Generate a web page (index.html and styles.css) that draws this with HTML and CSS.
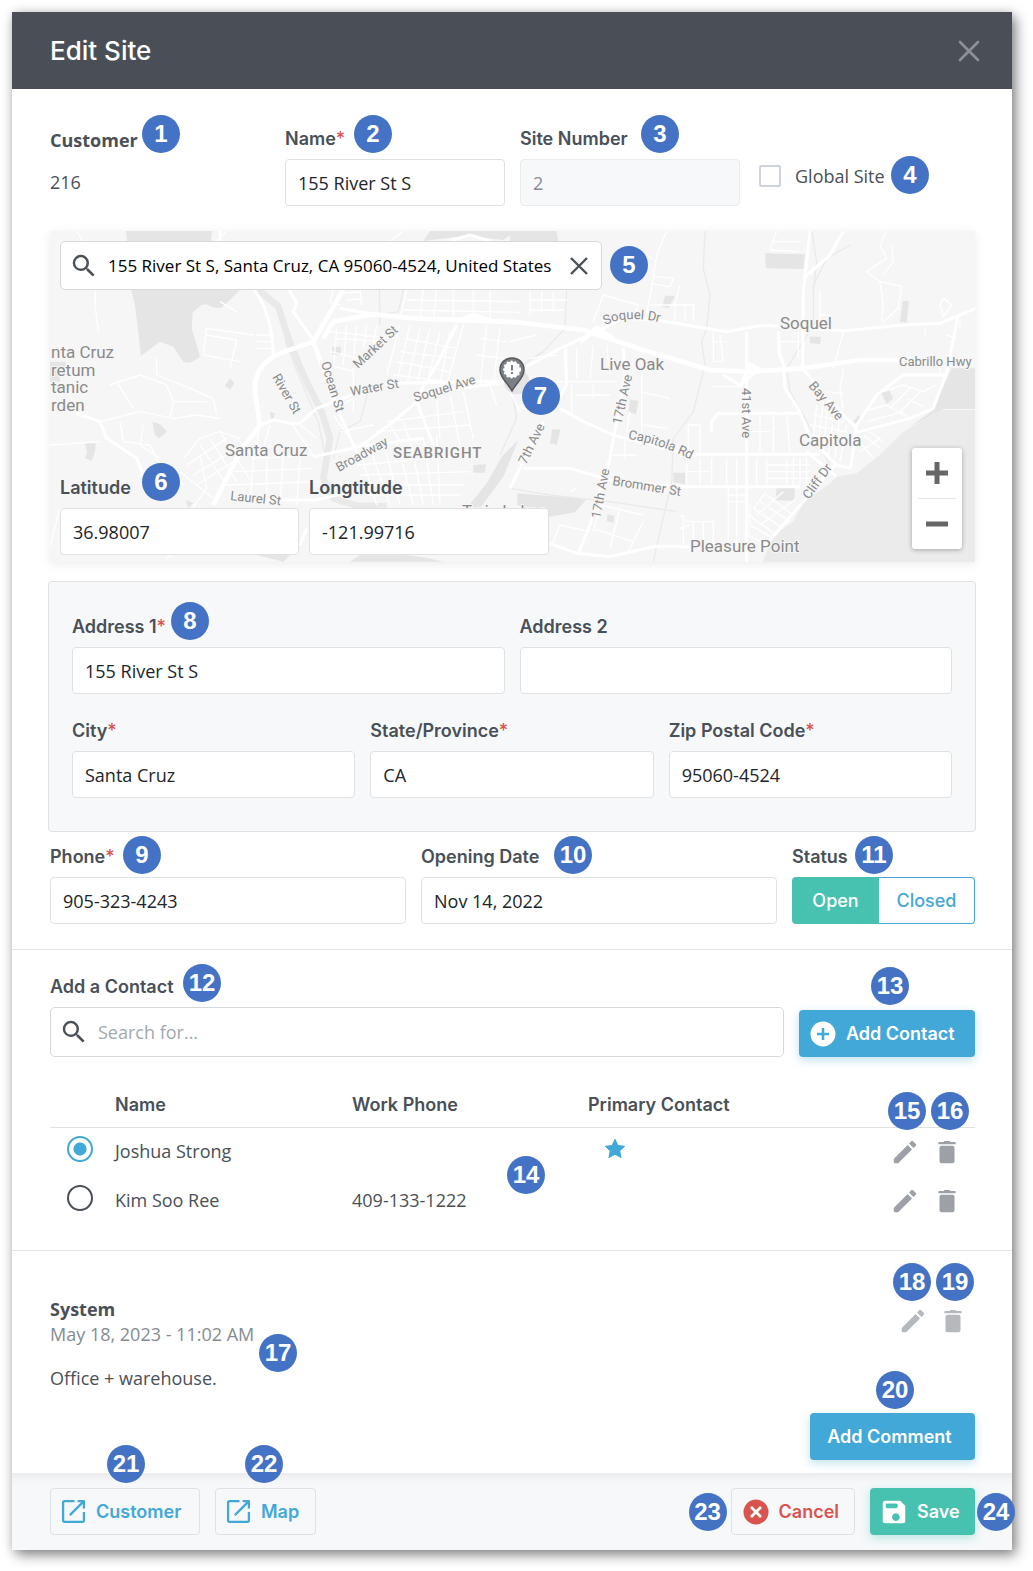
FILE: index.html
```html
<!DOCTYPE html>
<html lang="en">
<head>
<meta charset="utf-8">
<meta name="viewport" content="width=device-width, initial-scale=1">
<title>Edit Site</title>
<link rel="stylesheet" href="styles.css">
</head>
<body>
<svg class="sprite" aria-hidden="true">
  <symbol id="i-search" viewBox="0 0 24 24"><path fill="currentColor" d="M15.5 14h-.79l-.28-.27A6.47 6.47 0 0 0 16 9.500 6.500 6.500 0 1 0 9.500 16c1.610 0 3.090-.59 4.230-1.570l.27.28v.79l5 4.990L20.490 19l-4.990-5zm-6 0C7.010 14 5 11.990 5 9.500S7.010 5 9.500 5 14 7.010 14 9.500 11.990 14 9.500 14z"/></symbol>
  <symbol id="i-edit" viewBox="0 0 24 24"><path fill="currentColor" d="M3 17.500V20q0 1 1 1h2.500L17.600 9.900l-3.500-3.500zM20.700 7q.6-.7 0-1.400l-2.300-2.300q-.7-.6-1.400 0L15.200 5.200l3.600 3.600z"/></symbol>
  <symbol id="i-trash" viewBox="0 0 24 24"><path fill="currentColor" d="M5.700 4h3.600l.6-.8h4.200l.6.8h3.600q.7 0 .7.900t-.7.900H5.700q-.7 0-.7-.9t.7-.9zM6 8.600Q6 7 7.600 7h8.800Q18 7 18 8.600v10.800q0 1.600-1.600 1.600H7.600Q6 21 6 19.400z"/></symbol>
  <symbol id="i-open" viewBox="0 0 24 24"><path fill="none" stroke="currentColor" stroke-width="2.200" stroke-linejoin="round" d="M13 2H3.500Q2 2 2 3.500v17Q2 22 3.500 22h17q1.500 0 1.500-1.500V12.500M16 2h6v7M21.500 2.500 8.500 15.500"/></symbol>
</svg>

<main class="modal">
  <header class="modal-head">
    <h1>Edit Site</h1>
    <button class="bare close" aria-label="Close"><svg viewBox="0 0 22 22" width="22" height="22"><path d="M2 2l18 18M20 2 2 20" fill="none" stroke="currentColor" stroke-width="2.600" stroke-linecap="round"/></svg></button>
  </header>

  <section class="section details">
    <div class="row four">
      <div class="field"><span class="label plain">Customer</span><span class="static">216</span><b class="dot d1">1</b></div>
      <div class="field"><label for="name">Name<i>*</i></label><input id="name" type="text" value="155 River St S"><b class="dot d2">2</b></div>
      <div class="field"><label for="num">Site Number</label><input id="num" type="text" value="2" disabled><b class="dot d3">3</b></div>
      <div class="field check"><input id="global" type="checkbox"><label for="global">Global Site</label><b class="dot d4">4</b></div>
    </div>

    <div class="map">
      <svg class="map-art" viewBox="0 0 925 331" preserveAspectRatio="xMidYMid slice" aria-hidden="true">
        <g transform="translate(-10 -6) scale(.33333)">
          <g class="park">
            <path d="M258 18H516L512 60H262zM272 190 600 196 545 248Q520 252 500 238L485 240 458 262 455 310 480 395Q450 420 430 410L400 365 360 350 303 392 285 240zM1170 18H1430L1390 45 1280 32 1150 48z"/>
            <path d="M135 655h32l-2 25-10 28-20-8 6-20zM337 590l24 8 20 22-24 20-12-10zM570 460l13 15-13 20-15-13zM877 365h26v24h-26zM1300 720l38-2-3 25h-35zM1385 695l50-50-45 110-70 95h-40l60-75zM30 410h47v25H60v35H30zM437 825l23 10-15 14zM690 562l14 2-4 20-8-6zM650 990l100 0-20 20zM960 990q150-10 250 20H930z"/>
          </g>
          <path class="river" d="M650 190 715 245 745 340 790 450 845 560 870 640 860 700 850 760 880 820 950 842 1040 845"/>
          <path class="creek" d="M735 345 775 450 835 590 855 690M1090 194 1075 260 1015 270M1020 300 1018 194M985 500 960 590 900 620 880 700M1420 520 1430 580 1380 690"/>
          <path class="street" d="M110 18 170 120 165 240 175 320M500 310 640 330M500 310 490 390 600 410M500 330 590 345 570 430M650 330h50M650 350h50M650 370h45M30 660 180 650M180 590 300 560 400 580 470 570 540 580M240 590 250 650 330 660 360 720 430 780M210 480 300 450 380 480 400 530 390 580M230 470 280 550M350 400 350 450 450 490 520 520 530 570M400 530H500M310 600 300 660 360 700M430 700 480 640 540 620 600 640M440 720 560 640M460 750 590 670M470 780 610 690M480 660 560 780M510 640 590 770M420 740 520 820M540 620 640 780M590 640 640 700 820 690M480 690 500 790 450 860M640 700 630 840M680 700 680 840M730 690 720 840M780 700 770 840M580 740 820 730M560 780 830 770M660 600 640 700M750 590 820 690M770 590 830 640M690 600 660 700M540 230 590 260M880 194 870 230 900 240M960 194 965 240M910 205 960 200M920 225 960 222M870 320 1060 340M880 340 1040 350M890 310 880 430M920 300 910 420M950 300 940 400M980 300 970 370M1010 300 1000 360M870 380 960 400M870 420 940 440M940 430V560M940 520 890 550M1080 300 1040 450M1110 300 1070 470M1140 310 1100 480M1170 310 1130 480M1200 320 1160 480M1230 320 1200 480M1270 300 1220 480M1090 340 1250 370M1080 380 1240 400M1070 410 1230 440M1060 450 1220 470M1340 300 1320 480M1380 310 1360 480M1320 340 1400 350M1310 390 1390 400M1100 194 1080 280M1150 194 1140 285M1190 194 1180 285M1240 194V285M1300 194V285M1350 194V280M1100 225 1440 230M1090 255 1440 262M960 680 1010 840M990 670 1050 840M1030 650 1080 840M1070 650 1120 840M1110 640 1150 840M1150 640 1180 840M1190 630 1200 840M950 720 1290 690M960 750 1290 740M970 780 1270 780M980 810 1260 810M1050 600 1080 650M1090 590 1110 650M1190 520 1200 640M1230 510 1260 660M1270 500 1300 640M1010 620 1290 600M1040 590 1270 560M880 570 930 640M900 620 1000 600M1350 480 1370 540M60 850 20 1000M380 1000 440 960 520 990M560 18 530 48M1090 18 1050 48"/>
          <path class="road" d="M640 190Q700 270 700 400M745 190 770 235 760 260 820 345M850 430 900 570 950 680M660 600 700 585 750 595 780 595 830 550 900 525 1000 480 1070 475 1380 468M820 695 960 665 1060 590 1130 530 1200 500 1440 465M110 565 180 590 200 640 290 700 310 750M600 825 830 825 930 800M950 665 1150 640M1130 530 1180 660M900 250 1010 270M1250 300 1190 420 1130 520M780 960 800 910M540 18V48M1230 48 1290 30 1350 48"/>
          <path class="hwy" d="M520 840 600 680 660 600 645 500Q640 420 720 385L820 350 860 280 910 194M850 340 880 290 1000 268 1120 280 1440 292M820 350 850 430M1250 290 1300 270 1360 290"/>
        </g>
        <g transform="translate(460 -6) scale(.33333)">
          <path class="sea" d="M1420 555H1290L1180 620 1110 690 1040 745 980 755 955 780 880 830 850 890 790 930 755 1020H1420z"/>
          <g class="park">
            <path d="M1420 430H1325L1285 520 1270 555 1200 605 1300 552H1420zM765 85l120 3-5 44-112-2zM465 212h30l-10 20-10 18-18-5zM1178 228h19l-7 65-20-3zM900 335h33l-3 23-30-4zM1115 505l20-13 15 28-20 17zM360 523l25 5-7 40-23-8zM127 612l25 2-12 46-20-5zM490 743h35v35l-35-6zM800 780l55 5-2 43-56-3zM22 805 200 820 228 825 195 862 120 875 22 840zM0 18H140L145 48H0zM293 868l20 4-3 22-20-6zM1030 590l15-20 4 5-6 25z"/>
            <circle cx="20" cy="470" r="38"/>
          </g>
          <path class="creek" d="M585 18 580 130 600 210 590 310 575 350 585 420 550 560 490 640 485 770 450 920 430 1010M1020 60 950 100 910 180 910 300 830 430 840 500 880 570 960 720M170 190 165 310 100 380 20 430M905 18 920 110 910 200M0 790 120 810 300 830 500 860"/>
          <path class="street" d="M470 18 440 90 425 190 405 290M430 155 490 160 480 185 420 175M440 110 410 90M780 75 865 80M800 18 780 75M870 50H790M1130 18 1110 60 1130 100 1070 140 1110 170 1120 240 1115 290M1110 170 1175 185 1165 250 1120 290M1145 60 1150 110 1120 150M1300 220 1325 240 1300 275 1290 240zM1245 310V335M60 200V270M95 200V260M130 200V260M60 225H170M60 255H160M280 210 250 290M280 210 385 240 370 290M495 235V290M525 235V290M550 235V290M420 240H555M510 180 495 235M610 320V410H640L630 330M610 350H650M805 320V390L825 430M865 320V400M810 350H870M1000 320 970 430M930 200V310M960 270V310M930 270H960M170 370V480L150 520M120 470H320M185 480V570M200 510H300M250 480V520M200 370V460M250 360 240 460M290 360 300 450M395 450V640M390 500 480 520M400 600 470 610M345 640V700M300 690H380M350 620 360 560M750 565V680M790 565V680M830 565 840 680M720 620H780M535 600V680M570 600V685M535 600H570M530 700V780M570 700V780M605 700V780M650 700V780M680 700V780M740 700V780M770 700V780M530 740H600M830 700V780M850 700V780M870 700V780M890 700V780M770 720H900M770 740H900M770 760H900M655 785V960M680 785V960M655 810H710M655 830H710M520 870V970M550 890V970M580 890V970M610 890V970M510 870 530 890H615M510 910 540 900M715 870 800 930M730 850 820 910M750 830 840 890M770 810 850 870M720 900 790 940M715 930 770 960M720 840V900M770 800 730 850M820 800 740 870M860 820 750 900M920 540 910 640M940 530 925 660M955 520 940 680M975 540 955 690M990 560 975 700M1010 600 990 710M910 570 1000 590M900 600 1010 620M905 630 1010 650M1000 430 990 490 1000 560M930 500 1000 505M1120 500 1180 480 1240 500 1280 480M1140 550 1200 490M1170 560 1230 500M1190 520 1240 545M1060 560 1130 540 1200 580M1070 590 1180 560M1040 640 1090 700M1060 630 1110 670M1080 620 1120 650M1050 680 1110 640M270 840 250 920M270 840 400 870M400 890 350 990M330 850 300 970M250 910 370 950M150 900 130 950M150 900 240 920M0 500 30 560M20 540 60 560 130 545M0 350 80 330M1290 400V450M1350 290V310M1310 330 1340 340M200 790 180 800M60 400 140 390M610 485H700"/>
          <path class="road" d="M40 430 150 370 260 320 340 280 440 285 650 320 760 300 1000 318 1180 300 1290 295 1420 240M900 18 880 200 878 430 960 530 1040 610M710 320V1020M530 688H930M500 785H870M340 370 345 450 300 700 240 900 205 985M150 550 220 590 310 630 530 688M40 730 180 730 300 765 500 785M100 590 0 790M820 430 825 490 870 560 900 640 980 720 1020 730M1345 270 1310 440 1270 550 1200 580 1030 625M1310 450H1180L1100 510 1040 600 1022 730M750 980 880 830 980 715M605 620V590L625 565H865M120 955 200 985 300 995 430 965H540M805 320 810 390 825 430M640 450 690 480 740 440M1000 18 960 90 880 160M165 370 170 480 150 510M890 680 980 755"/>
          <path class="hwy" d="M0 290 220 315 400 375 600 435 720 440 880 430 1050 405 1180 405M210 350 260 310 310 340M700 470 720 420 750 435"/>
        </g>
        <g class="place">
          <text x="1" y="127">nta Cruz</text><text x="1" y="145">retum</text><text x="1" y="162">tanic</text><text x="1" y="180">rden</text>
          <text x="175" y="225">Santa Cruz</text><text x="550" y="139">Live Oak</text><text x="730" y="98">Soquel</text><text x="749" y="215">Capitola</text><text x="640" y="321">Pleasure Point</text><text x="412" y="286">Twin Lakes</text>
        </g>
        <text class="district" x="343" y="227">SEABRIGHT</text>
        <g class="way">
          <text x="849" y="135">Cabrillo Hwy</text>
          <text transform="translate(308 138) rotate(-43)">Market St</text>
          <text transform="translate(301 165) rotate(-10)">Water St</text>
          <text transform="translate(365 171) rotate(-17)">Soquel Ave</text>
          <text transform="translate(222 146) rotate(60)">River St</text>
          <text transform="translate(271 132) rotate(73)">Ocean St</text>
          <text transform="translate(289 241) rotate(-29)">Broadway</text>
          <text transform="translate(180 269) rotate(6)">Laurel St</text>
          <text transform="translate(476 234) rotate(-64)">7th Ave</text>
          <text transform="translate(571 194) rotate(-77)">17th Ave</text>
          <text transform="translate(550 288) rotate(-79)">17th Ave</text>
          <text transform="translate(692 157) rotate(90)">41st Ave</text>
          <text transform="translate(758 155) rotate(50)">Bay Ave</text>
          <text transform="translate(759 269) rotate(-54)">Cliff Dr</text>
          <text transform="translate(562 254) rotate(9)">Brommer St</text>
          <path id="soquel-dr" fill="none" d="M555 94Q580 82 620 94"/><text><textPath href="#soquel-dr">Soquel Dr</textPath></text>
          <path id="capitola-rd" fill="none" d="M578 208Q610 212 650 233"/><text><textPath href="#capitola-rd">Capitola Rd</textPath></text>
        </g>
        <g transform="translate(449 126)">
          <path d="M13 1C6 1 1 6 1 13c0 8 7 12 12 21 5-9 12-13 12-21C25 6 20 1 13 1z" fill="#7b8085" stroke="#54585c" stroke-width="1.500"/>
          <circle cx="13" cy="12.500" r="8" fill="#fff"/><circle cx="13" cy="12.500" r="8" fill="none" stroke="#fff" stroke-width="2" stroke-dasharray="2 2"/>
          <path d="M13 8v5.500M13 15v2" stroke="#7b8085" stroke-width="2"/>
        </g>
      </svg>
      <div class="search map-search"><svg class="icon"><use href="#i-search"/></svg><input type="text" aria-label="Search address" value="155 River St S, Santa Cruz, CA 95060-4524, United States"><button class="bare clear" aria-label="Clear"><svg width="18" height="18" viewBox="0 0 18 18"><path d="M1 1l16 16M17 1 1 17" stroke="currentColor" stroke-width="2.400"/></svg></button><b class="dot d5">5</b></div>
      <div class="coords">
        <div class="field"><label for="lat">Latitude</label><input id="lat" type="text" value="36.98007"><b class="dot d6">6</b></div>
        <div class="field"><label for="lng">Longtitude</label><input id="lng" type="text" value="-121.99716"></div>
      </div>
      <div class="zoom">
        <button class="bare" aria-label="Zoom in"><svg width="22" height="22" viewBox="0 0 22 22"><path d="M0 11h22M11 0v22" stroke="#666" stroke-width="5"/></svg></button>
        <button class="bare" aria-label="Zoom out"><svg width="22" height="22" viewBox="0 0 22 22"><path d="M0 11h22" stroke="#666" stroke-width="5"/></svg></button>
      </div>
      <b class="dot d7">7</b>
    </div>

    <div class="panel">
      <div class="row two">
        <div class="field"><label for="a1">Address 1<i>*</i></label><input id="a1" type="text" value="155 River St S"><b class="dot d8">8</b></div>
        <div class="field"><label for="a2">Address 2</label><input id="a2" type="text"></div>
      </div>
      <div class="row three">
        <div class="field"><label for="city">City<i>*</i></label><input id="city" type="text" value="Santa Cruz"></div>
        <div class="field"><label for="state">State/Province<i>*</i></label><input id="state" type="text" value="CA"></div>
        <div class="field"><label for="zip">Zip Postal Code<i>*</i></label><input id="zip" type="text" value="95060-4524"></div>
      </div>
    </div>

    <div class="row status-row">
      <div class="field"><label for="phone">Phone<i>*</i></label><input id="phone" type="text" value="905-323-4243"><b class="dot d9">9</b></div>
      <div class="field"><label for="date">Opening Date</label><input id="date" type="text" value="Nov 14, 2022"><b class="dot d10">10</b></div>
      <div class="field"><span class="label" id="status">Status</span>
        <div class="toggle" role="group" aria-labelledby="status"><button class="on" aria-pressed="true">Open</button><button aria-pressed="false">Closed</button></div><b class="dot d11">11</b></div>
    </div>
  </section>

  <section class="section contacts">
    <div class="add-row">
      <div class="field"><label for="find">Add a Contact</label>
        <div class="search"><svg class="icon"><use href="#i-search"/></svg><input id="find" type="text" placeholder="Search for..."></div><b class="dot d12">12</b></div>
      <button class="btn blue add-contact"><svg class="icon" viewBox="0 0 24 24"><circle cx="12" cy="12" r="10" fill="#fff"/><path d="M12 7.200v9.600M7.200 12h9.600" stroke="#42a8d7" stroke-width="2"/></svg>Add Contact<b class="dot d13">13</b></button>
    </div>
    <div class="table-wrap">
      <table>
        <colgroup><col class="c-pick"><col class="c-name"><col class="c-phone"><col><col class="c-act"></colgroup>
        <thead><tr><th></th><th>Name</th><th>Work Phone</th><th>Primary Contact</th><th></th></tr></thead>
        <tbody>
          <tr><td><input type="radio" name="contact" aria-label="Joshua Strong" checked></td><td>Joshua Strong</td><td></td><td><svg class="star" viewBox="0 0 22 22" width="22" height="22"><path fill="#42a8d7" stroke="#42a8d7" stroke-linejoin="round" d="M11 1.300l2.900 6.200 6.800.8-5 4.600 1.400 6.700-6.100-3.400-6.100 3.400 1.400-6.700-5-4.600 6.800-.8z"/></svg></td>
            <td><div class="acts"><button class="bare" aria-label="Edit"><svg class="icon"><use href="#i-edit"/></svg></button><button class="bare" aria-label="Delete"><svg class="icon"><use href="#i-trash"/></svg></button></div></td></tr>
          <tr><td><input type="radio" name="contact" aria-label="Kim Soo Ree"></td><td>Kim Soo Ree</td><td>409-133-1222</td><td></td>
            <td><div class="acts"><button class="bare" aria-label="Edit"><svg class="icon"><use href="#i-edit"/></svg></button><button class="bare" aria-label="Delete"><svg class="icon"><use href="#i-trash"/></svg></button></div></td></tr>
        </tbody>
      </table>
      <b class="dot d14">14</b><b class="dot d15">15</b><b class="dot d16">16</b>
    </div>
  </section>

  <section class="section comments">
    <div class="comment">
      <div><strong>System</strong><time>May 18, 2023 - 11:02 AM</time><p>Office + warehouse.</p><b class="dot d17">17</b></div>
      <div class="acts light"><button class="bare" aria-label="Edit"><svg class="icon"><use href="#i-edit"/></svg></button><button class="bare" aria-label="Delete"><svg class="icon"><use href="#i-trash"/></svg></button></div>
      <b class="dot d18">18</b><b class="dot d19">19</b>
    </div>
    <button class="btn blue add-comment">Add Comment<b class="dot d20">20</b></button>
  </section>

  <footer class="modal-foot">
    <button class="btn line to-customer"><svg class="icon small"><use href="#i-open"/></svg>Customer<b class="dot d21">21</b></button>
    <button class="btn line to-map"><svg class="icon small"><use href="#i-open"/></svg>Map<b class="dot d22">22</b></button>
    <button class="btn line red"><svg class="icon" viewBox="0 0 24 24"><circle cx="12" cy="12" r="10" fill="#d9534f"/><path d="M8 8l8 8M16 8l-8 8" stroke="#fff" stroke-width="2.200"/></svg>Cancel<b class="dot d23">23</b></button>
    <button class="btn green"><svg class="icon" viewBox="0 0 24 24"><path fill="#fff" fill-rule="evenodd" d="M5 3h12l4 4v12q0 2-2 2H5q-2 0-2-2V5q0-2 2-2zM6.600 5.200q-1.300 0-1.300 1.800t1.300 1.900h7.200q1.300 0 1.300-1.900t-1.300-1.800zM13.500 13a3.100 3.100 0 1 0 .01 0z"/></svg>Save<b class="dot d24">24</b></button>
  </footer>
</main>
</body>
</html>
```
FILE: styles.css
```css
* { box-sizing: border-box; }
body {
  margin: 0;
  padding: 12px 21px 21px 12px;
  background: #fff;
  color: #495057;
  font: 18px/25px "Open Sans", "Noto Sans", sans-serif;
}
.sprite { position: absolute; width: 0; height: 0; }
button, input { font: inherit; color: inherit; }
button { cursor: pointer; }
.bare { display: flex; padding: 0; border: 0; background: none; }
.icon { display: block; flex: none; width: 30px; height: 30px; }
.icon.small { width: 25px; height: 25px; margin: 0 2px 0 1px; }

.modal {
  background: #fff;
  box-shadow: 4px 5px 12px rgba(0, 0, 0, .45), 0 0 10px rgba(0, 0, 0, .12);
}
.modal-head {
  display: flex;
  align-items: center;
  justify-content: space-between;
  height: 77px;
  padding: 0 32px 0 38px;
  background: #4a4f57;
  color: #fff;
}
h1 { margin: 0; font: 500 26px/32px Inter, sans-serif; }
.close { color: #8d9197; }
.section { padding: 25px 37px 25px 38px; border-bottom: 1px solid #e2e4e6; }
.details { padding-top: 38px; }

/* Form rows */
.row { display: grid; gap: 15px; }
.four { grid-template-columns: repeat(4, 1fr); }
.two { grid-template-columns: repeat(2, 1fr); }
.three { grid-template-columns: repeat(3, 1fr); }
.field { position: relative; min-width: 0; }
.field label, .label {
  display: block;
  margin-bottom: 8px;
  font: 600 18px/24px Inter, sans-serif;
  color: #495057;
}
.label.plain { font: 700 18px/26px "Open Sans", sans-serif; margin-bottom: 6px; }
label i { font-style: normal; font-weight: 500; color: #d9534f; }
.static { display: block; line-height: 47px; }
input[type="text"] {
  display: block;
  width: 100%;
  height: 47px;
  padding: 0 12px;
  border: 1px solid #dfe2e5;
  border-radius: 4px;
  background: #fff;
  color: #212529;
}
input[type="text"]:disabled { background: #f6f8fa; border-color: #e9ecef; color: #868b91; }
input::placeholder { color: #a3a8ad; opacity: 1; }
.check { display: flex; align-items: center; gap: 14px; padding: 19px 0 0 4px; }
.field.check label { margin: 0; font: inherit; }
input[type="checkbox"] {
  appearance: none;
  width: 22px;
  height: 22px;
  margin: 0;
  border: 2px solid #ced4da;
  border-radius: 2px;
  background: #fff;
}

/* Map */
.map {
  position: relative;
  display: flex;
  flex-direction: column;
  justify-content: space-between;
  align-items: flex-start;
  height: 331px;
  margin: 25px 0 19px;
  padding: 10px 10px 7px;
  background: #f6f6f6;
  box-shadow: 0 2px 10px rgba(0, 0, 0, .08);
}
.map-art { position: absolute; inset: 0; width: 100%; height: 100%; }
.park { fill: #e5e5e5; }
.sea { fill: #ebebeb; }
.river, .creek, .street, .road, .hwy { fill: none; stroke-linejoin: round; }
.river { stroke: #e9e9e9; stroke-width: 20; }
.creek { stroke: #eaeaea; stroke-width: 4; }
.street { stroke: #fff; stroke-width: 4; }
.road { stroke: #fff; stroke-width: 9; }
.hwy { stroke: #fff; stroke-width: 14; }
.place, .district, .way { font-family: Roboto, sans-serif; fill: #8a8a8a; stroke: #f7f7f7; stroke-width: 2px; paint-order: stroke; }
.place { font-size: 17px; }
.district { font-size: 15px; font-weight: 500; letter-spacing: 1px; }
.way { font-size: 13px; }
.way path { stroke: none; }
.search {
  display: flex;
  align-items: center;
  gap: 9px;
  height: 50px;
  padding: 0 14px 0 8px;
  border: 1px solid #d6d9dc;
  border-radius: 5px;
  background: #fff;
  color: #495057;
}
.search input[type="text"] { flex: 1; min-width: 0; height: 46px; padding: 0; border: 0; }
.map-search { position: relative; width: 542px; height: 49px; padding-right: 13px; }
.map-search input[type="text"] { color: #000; font-size: 17px; }
.clear { color: #495057; }
.coords { position: relative; display: grid; grid-template-columns: 239px 240px; gap: 10px; }
.zoom {
  position: absolute;
  right: 13px;
  bottom: 13px;
  width: 50px;
  padding: 0 6px;
  border-radius: 3px;
  background: #fff;
  box-shadow: 0 1px 5px rgba(0, 0, 0, .3);
}
.zoom button { width: 100%; height: 50px; align-items: center; justify-content: center; }
.zoom button + button { height: 51px; border-top: 1px solid #e6e6e6; }

.panel {
  display: grid;
  gap: 25px;
  margin: 0 -1px 13px -2px;
  padding: 33px 23px;
  border: 1px solid #dfe2e5;
  border-radius: 4px;
  background: #f6f8fa;
}
.status-row { grid-template-columns: 1fr 1fr 183px; }
.toggle { display: flex; height: 47px; }
.toggle button {
  flex: 1 1 96px;
  padding: 0;
  border: 1px solid #42a8d7;
  border-left: 0;
  border-radius: 0 4px 4px 0;
  background: #fff;
  color: #42a8d7;
  font: 500 18px/24px Inter, sans-serif;
}
.toggle .on { flex-basis: 87px; border: 0; border-radius: 4px 0 0 4px; background: #48c2b0; color: #fff; }

/* Contacts */
.add-row { display: flex; align-items: flex-end; gap: 15px; margin-bottom: 27px; }
.add-row .field { flex: 1; }
.btn {
  position: relative;
  display: flex;
  align-items: center;
  gap: 8px;
  height: 47px;
  padding: 0 15px 0 9px;
  border: 0;
  border-radius: 4px;
  font: 600 18px/24px Inter, sans-serif;
  white-space: nowrap;
}
.blue { background: #42a8d7; color: #fff; box-shadow: 0 3px 10px rgba(66, 168, 215, .35); }
.green { min-width: 105px; background: #48c2b0; color: #fff; box-shadow: 0 3px 10px rgba(72, 194, 176, .35); }
.line { border: 1px solid #dfe2e5; background: none; color: #42a8d7; }
.line.red { min-width: 123px; margin-left: auto; color: #d9534f; }
.add-contact { min-width: 176px; }
.to-customer { min-width: 150px; }
.to-map { min-width: 101px; }
.table-wrap { position: relative; }
table { width: 100%; table-layout: fixed; border-collapse: collapse; }
.c-pick { width: 65px; }
.c-name { width: 237px; }
.c-phone { width: 236px; }
.c-act { width: 86px; }
th { height: 43px; padding: 0; border-bottom: 1px solid #dfe2e5; text-align: left; font: 600 18px/24px Inter, sans-serif; }
td { height: 49px; padding: 0; vertical-align: middle; }
.star { display: block; margin: 0 0 6px 16px; }
input[type="radio"] {
  appearance: none;
  display: block;
  width: 26px;
  height: 26px;
  margin: 0 0 6px 17px;
  border: 2px solid #495057;
  border-radius: 50%;
}
input[type="radio"]:checked { border-color: #42a8d7; background: radial-gradient(circle, #42a8d7 6px, #fff 7px); }
.acts { display: flex; justify-content: flex-end; gap: 12px; padding-right: 13px; color: #9da1a7; }
.acts.light { gap: 10px; padding-right: 7px; margin-top: 9px; color: #b4b9be; }

/* Comments */
.comments { padding-top: 46px; padding-bottom: 13px; border: 0; }
.comment { position: relative; display: flex; justify-content: space-between; align-items: flex-start; margin-bottom: 22px; }
.comment strong, .comment time { display: block; }
.comment time { color: #868b91; }
.comment p { margin: 19px 0 0; }
.add-comment { min-width: 165px; justify-content: center; margin-left: auto; }
.modal-foot {
  display: flex;
  align-items: center;
  gap: 15px;
  height: 77px;
  padding: 0 37px 0 38px;
  background: #f6f8fa;
  box-shadow: inset 0 12px 12px -10px rgba(0, 0, 0, .08);
}

/* Numbered callouts */
.dot {
  position: absolute;
  z-index: 2;
  width: 38px;
  height: 38px;
  border-radius: 50%;
  background: #4472c4;
  color: #fff;
  font: 700 24px/38px "Liberation Sans", Arial, sans-serif;
  text-align: center;
}
.d1 { left: 92px; top: -12px; }
.d2 { left: 69px; top: -12px; }
.d3 { left: 121px; top: -12px; }
.d4 { left: 136px; top: 29px; }
.d5 { left: 549px; top: 4px; }
.d6 { left: 82px; top: -13px; }
.d7 { left: calc(50% + 9px); top: 146px; }
.d8 { left: 99px; top: -13px; }
.d9 { left: 73px; top: -9px; }
.d10 { left: 133px; top: -9px; }
.d11 { left: 63px; top: -9px; }
.d12 { left: 133px; top: -11px; }
.d13 { left: 72px; top: -43px; }
.d14 { left: 457px; top: 72px; }
.d15 { right: 49px; top: 8px; }
.d16 { right: 6px; top: 8px; }
.d17 { left: 209px; top: 37px; }
.d18 { right: 44px; top: -34px; }
.d19 { right: 1px; top: -34px; }
.d20 { right: 61px; top: -42px; }
.d21 { left: 56px; top: -44px; }
.d22 { left: 29px; top: -44px; }
.d23 { left: -43px; top: 4px; }
.d24 { right: -40px; top: 5px; }
```
